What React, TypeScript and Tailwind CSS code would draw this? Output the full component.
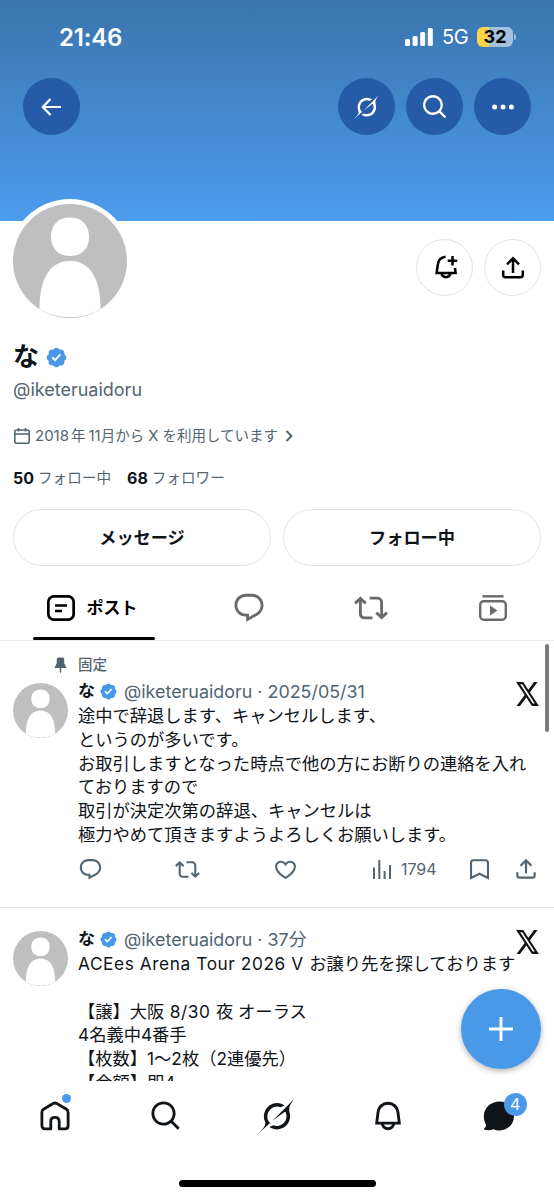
import type { ReactNode } from 'react';

const paths = {
  reply:
    'M1.751 10c0-4.42 3.584-8 8.005-8h4.366c4.49 0 8.129 3.64 8.129 8.13 0 2.96-1.607 5.68-4.196 7.11l-8.054 4.46v-3.69h-.067c-4.49.1-8.183-3.51-8.183-8.01zm8.005-6c-3.317 0-6.005 2.69-6.005 6 0 3.37 2.77 6.08 6.138 6.01l.351-.01h1.761v2.3l5.087-2.81c1.951-1.08 3.163-3.13 3.163-5.36 0-3.39-2.744-6.13-6.129-6.13H9.756z',
  repost:
    'M4.5 3.88l4.432 4.14-1.364 1.46L5.5 7.55V16c0 1.1.896 2 2 2H13v2H7.5c-2.209 0-4-1.79-4-4V7.55L1.432 9.48.068 8.02 4.5 3.88zM16.5 6H11V4h5.5c2.209 0 4 1.79 4 4v8.45l2.068-1.93 1.364 1.46-4.432 4.14-4.432-4.14 1.364-1.46 2.068 1.93V8c0-1.1-.896-2-2-2z',
  like: 'M16.697 5.5c-1.222-.06-2.679.51-3.89 2.16l-.805 1.09-.806-1.09C9.984 6.01 8.526 5.44 7.304 5.5c-1.243.07-2.349.78-2.91 1.91-.552 1.12-.633 2.78.479 4.82 1.074 1.97 3.257 4.27 7.129 6.61 3.87-2.34 6.052-4.64 7.126-6.61 1.111-2.04 1.03-3.7.477-4.82-.561-1.13-1.666-1.84-2.908-1.91zm4.187 7.69c-1.351 2.48-4.001 5.12-8.379 7.67l-.503.3-.504-.3c-4.379-2.55-7.029-5.19-8.382-7.67-1.36-2.5-1.41-4.86-.514-6.67.887-1.79 2.647-2.91 4.601-3.01 1.651-.09 3.368.56 4.798 2.01 1.429-1.45 3.146-2.1 4.796-2.01 1.954.1 3.714 1.22 4.601 3.01.896 1.81.846 4.17-.514 6.67z',
  share:
    'M12 2.59l5.7 5.7-1.41 1.42L13 6.41V16h-2V6.41l-3.3 3.3-1.41-1.42L12 2.59zM21 15l-.02 3.51c0 1.38-1.12 2.49-2.5 2.49H5.5C4.11 21 3 19.88 3 18.5V15h2v3.5c0 .28.22.5.5.5h12.98c.28 0 .5-.22.5-.5L19 15h2z',
  search:
    'M10.25 3.75c-3.59 0-6.5 2.91-6.5 6.5s2.91 6.5 6.5 6.5c1.795 0 3.419-.726 4.596-1.904 1.178-1.177 1.904-2.801 1.904-4.596 0-3.59-2.91-6.5-6.5-6.5zm-8.5 6.5c0-4.694 3.806-8.5 8.5-8.5s8.5 3.806 8.5 8.5c0 1.986-.682 3.815-1.824 5.262l4.781 4.781-1.414 1.414-4.781-4.781c-1.447 1.142-3.276 1.824-5.262 1.824-4.694 0-8.5-3.806-8.5-8.5z',
  bell: 'M19.993 9.042C19.48 5.017 16.054 2 11.996 2s-7.49 3.021-7.999 7.051L2.866 18H7.1c.463 2.282 2.481 4 4.9 4s4.437-1.718 4.9-4h4.236l-1.143-8.958zM12 20c-1.306 0-2.417-.835-2.829-2h5.658c-.412 1.165-1.523 2-2.829 2zm-6.866-4l.847-6.698C6.364 6.272 8.941 4 11.996 4s5.627 2.268 6.013 5.295L18.864 16H5.134z',
  pin: 'M7 4.5C7 3.12 8.12 2 9.5 2h5C15.88 2 17 3.12 17 4.5v5.26L20.12 16H13v5l-1 2-1-2v-5H3.88L7 9.76V4.5z',
};

const Icon = ({ name, className }: { name: keyof typeof paths; className: string }) => (
  <svg viewBox="0 0 24 24" fill="currentColor" className={`shrink-0 ${className}`}>
    <path d={paths[name]} />
  </svg>
);

const GrokIcon = ({ className }: { className: string }) => (
  <svg viewBox="0 0 33 32" fill="currentColor" className={className}>
    <path d="M12.745 20.54l10.97-8.19c.539-.4 1.307-.244 1.564.38 1.349 3.288.746 7.241-1.938 9.955-2.683 2.714-6.417 3.31-9.83 1.954l-3.728 1.745c5.347 3.697 11.84 2.782 15.898-1.324 3.219-3.255 4.216-7.692 3.284-11.693l.008.009c-1.351-5.878.332-8.227 3.782-13.031L33 0l-4.54 4.59v-.014L12.743 20.544m-2.263 1.987c-3.837-3.707-3.175-9.446.1-12.755 2.42-2.449 6.388-3.448 9.852-1.979l3.72-1.737c-.67-.49-1.53-1.017-2.515-1.387-4.455-1.854-9.789-.931-13.41 2.728-3.483 3.523-4.579 8.94-2.697 13.561 1.405 3.454-.899 5.898-3.22 8.364C1.49 30.2.666 31.074 0 32l10.478-9.466" />
  </svg>
);

const XLogo = () => (
  <svg viewBox="1.2 2.2 21.7 19.6" preserveAspectRatio="none" fill="#0f1419" className="h-6 w-[23px]">
    <path d="M18.244 2.25h3.308l-7.227 8.26 8.502 11.24H16.17l-5.214-6.817L4.99 21.75H1.68l7.73-8.835L1.254 2.25H8.08l4.713 6.231zm-1.161 17.52h1.833L7.084 4.126H5.117z" />
  </svg>
);

const Verified = ({ className }: { className: string }) => (
  <svg viewBox="0 0 22 22" fill="#4a99e9" className={className}>
    <path d="M20.396 11c-.018-.646-.215-1.275-.57-1.816-.354-.54-.852-.972-1.438-1.246.223-.607.27-1.264.14-1.897-.131-.634-.437-1.218-.882-1.687-.47-.445-1.053-.75-1.687-.882-.633-.13-1.29-.083-1.897.14-.273-.587-.704-1.086-1.245-1.44S11.647 1.62 11 1.604c-.646.017-1.273.213-1.813.568s-.969.854-1.24 1.44c-.608-.223-1.267-.272-1.902-.14-.635.13-1.22.436-1.69.882-.445.47-.749 1.055-.878 1.688-.13.633-.08 1.29.144 1.896-.587.274-1.087.705-1.443 1.245-.356.54-.555 1.17-.574 1.817.02.647.218 1.276.574 1.817.356.54.856.972 1.443 1.245-.224.606-.274 1.263-.144 1.896.13.634.433 1.218.877 1.688.47.443 1.054.747 1.687.878.633.132 1.29.084 1.897-.136.274.586.705 1.084 1.246 1.439.54.354 1.17.551 1.816.569.647-.016 1.276-.213 1.817-.567s.972-.854 1.245-1.44c.604.239 1.266.296 1.903.164.636-.132 1.22-.447 1.68-.907.46-.46.776-1.044.908-1.681s.075-1.299-.165-1.903c.586-.274 1.084-.705 1.439-1.246.354-.54.551-1.17.569-1.816zM9.662 14.85l-3.429-3.428 1.293-1.302 2.072 2.072 4.4-4.794 1.347 1.246z" />
  </svg>
);

const Avatar = ({ className }: { className: string }) => (
  <div className={`shrink-0 rounded-full overflow-hidden bg-[#bfbfbf] ${className}`}>
    <svg viewBox="0 0 114 114" fill="#fff" className="w-full h-full">
      <path d="M57 13.5c12 0 19 7.500 19 19.500S68.500 52 57 52s-19-7-19-19S45 13.500 57 13.500z" />
      <path d="M26.500 105C26.500 76 36 57 57 57s30.500 19 30.500 48c-17 11-44 11-61 0z" />
    </svg>
  </div>
);

const HeaderButton = ({ children }: { children: ReactNode }) => (
  <button className="w-[57px] h-[57px] rounded-full bg-[#265ca7] text-white flex items-center justify-center">
    {children}
  </button>
);

const StatusBar = () => (
  <div className="h-[74px] flex items-center justify-between pl-[59px] pr-[38px] text-white">
    <span className="mt-0.5 text-[24px] font-semibold tracking-[-0.2px]">21:46</span>
    <div className="flex items-center">
      <svg viewBox="0 0 28 18" fill="#fff" className="w-7 h-[18px]">
        <rect x="0" y="11" width="5" height="7" rx="1.500" />
        <rect x="7.600" y="8" width="5" height="10" rx="1.500" />
        <rect x="15.200" y="4" width="5" height="14" rx="1.500" />
        <rect x="22.800" y="0" width="5" height="18" rx="1.500" />
      </svg>
      <span className="text-[20px] ml-[9px] w-[26px] tracking-[-0.4px] leading-6">5G</span>
      <div className="ml-[9px] h-5 w-[36px] rounded-md bg-gradient-to-r from-[#fad547] from-[34%] to-[#a2c1dc] to-[34%] flex items-center justify-center text-black text-[18px] font-bold leading-5">
        32
      </div>
      <div className="ml-px w-[2px] h-1.5 rounded-r-full bg-[#a2c1dc]" />
    </div>
  </div>
);

const tabIcon = 'w-[34px] h-[34px]';

const Tabs = () => (
  <div className="h-[75px] border-b border-[#e9edef] flex text-[#6a6a6a]">
    <div className="w-[188px] pl-[33px]">
      <div className="w-[122px] h-full flex flex-col">
        <div className="flex-1 pt-[13px] pr-[4px] flex items-center justify-center gap-3 text-black">
          <svg viewBox="0 0 28 26" fill="none" stroke="currentColor" strokeWidth="2.700" className="w-7 h-[26px]">
            <rect x="1.350" y="1.350" width="25.300" height="23.300" rx="5.500" />
            <path d="M8 10.500h12M8 16h7" strokeWidth="2.500" />
          </svg>
          <span className="text-[17px] font-bold leading-6">ポスト</span>
        </div>
        <div className="h-[3px] rounded-full bg-black" />
      </div>
    </div>
    <div className="flex-1 pt-[10px] flex items-center justify-center">
      <Icon name="reply" className={tabIcon} />
    </div>
    <div className="flex-1 pt-[10px] flex items-center justify-center">
      <Icon name="repost" className={tabIcon} />
    </div>
    <div className="flex-1 pt-[10px] flex items-center justify-center">
      <svg viewBox="0 0 28 26" fill="none" stroke="currentColor" strokeWidth="2.400" className="w-7 h-[26px]">
        <rect x="1.200" y="6.200" width="25.600" height="18.600" rx="3.500" />
        <path d="M3.500 1.300h21" />
        <path d="M11 10.500l7.500 5-7.500 5z" fill="currentColor" stroke="none" />
      </svg>
    </div>
  </div>
);

const TweetHeader = ({ date }: { date: string }) => (
  <div className="h-[23px] flex items-center text-[17px] leading-[23px] whitespace-nowrap">
    <span className="font-bold text-[#0f1419]">な</span>
    <Verified className="w-[19px] h-[19px] ml-1 mr-1.5" />
    <span className="text-[#536471] text-[17.900px]">@iketeruaidoru · {date}</span>
  </div>
);

// Latin runs are tracked slightly wider than the Japanese text around them
const TweetLine = ({ text }: { text: string }) => (
  <div className="h-[23.800px]">
    {text.split(/([ -~]{2,})/).map((part, i) => (
      <span key={i} className={i % 2 ? 'tracking-[0.580px]' : ''}>{part}</span>
    ))}
  </div>
);

const Tweet = ({ pinned, date, lines, children }: { pinned?: boolean; date: string; lines: string[]; children?: ReactNode }) => (
  <article className="pr-[15px] pl-[13px]">
    {pinned && (
      <div className="flex items-center h-5 mb-[5px] text-[#536471] text-[14.500px] font-medium leading-5">
        <Icon name="pin" className="w-[19px] h-[18px] ml-[38px] mr-2" />
        固定
      </div>
    )}
    <div className="flex">
      <Avatar className="w-[55px] h-[55px] mt-[3px]" />
      <div className="ml-[10px] flex-1 min-w-0">
        <div className="flex justify-between">
          <TweetHeader date={date} />
          <div className="h-[23px] mt-0.5">
            <XLogo />
          </div>
        </div>
        <div className="-mt-px text-[17.270px] leading-[23.800px] text-[#0f1419] whitespace-pre">
          {lines.map((line, i) => (
            <TweetLine key={i} text={line} />
          ))}
        </div>
        {children}
      </div>
    </div>
  </article>
);

const Actions = () => (
  <div className="mt-[10px] h-[25px] flex items-center text-[#536471]">
    <div className="w-[97.800px]"><Icon name="reply" className="w-[25px] h-[25px]" /></div>
    <div className="w-[97.800px]"><Icon name="repost" className="w-[25px] h-[25px]" /></div>
    <div className="w-[97.800px]"><Icon name="like" className="w-[25px] h-[25px]" /></div>
    <div className="w-[97.800px] flex items-center gap-[10px] pl-[3px]">
      <svg viewBox="0 0 18 19" fill="currentColor" className="w-[18px] h-[19px]">
        <path d="M0 7.500h2V19H0zM5.300 0h2v19h-2zM10.600 11h2v8h-2zM16 5h2v14h-2z" />
      </svg>
      <span className="text-[16px] leading-5">1794</span>
    </div>
    <div className="w-[46px] pl-[3px]">
      <svg viewBox="0 0 19 21" fill="none" stroke="currentColor" strokeWidth="2.100" className="w-[19px] h-[21px]">
        <path d="M1.050 19V3.500a2.200 2.200 0 0 1 2.200-2.200h12.500a2.200 2.200 0 0 1 2.200 2.200V19L9.500 14.700z" />
      </svg>
    </div>
    <Icon name="share" className="w-[26px] h-[26px]" />
  </div>
);

const BottomNav = () => (
  <nav className="h-[118px] bg-white flex flex-col items-center justify-between">
    <div className="h-[70px] w-full grid grid-cols-5 place-items-center text-[#0f1419]">
      <div className="relative">
        <svg viewBox="0 0 30 30" fill="none" stroke="currentColor" strokeWidth="2.800" strokeLinejoin="round" className="w-[30px] h-[30px]">
          <path d="M1.900 11.200c0-1.300.5-2.200 1.600-2.900L13.200 2.500c1.200-.7 2.400-.7 3.600 0l9.700 5.800c1.100.7 1.600 1.600 1.600 2.900v13.600c0 2-1.100 3.100-3.100 3.100h-5.800v-7.600c0-2.400-1.700-4-4.200-4s-4.200 1.600-4.200 4v7.600H5c-2 0-3.100-1.100-3.100-3.100z" />
        </svg>
        <span className="absolute -top-[7px] -right-[1px] w-[9px] h-[9px] rounded-full bg-[#4a99e9]" />
      </div>
      <Icon name="search" className="w-[34px] h-[34px]" />
      <GrokIcon className="w-[35px] h-[34px]" />
      <Icon name="bell" className="w-[34px] h-[34px]" />
      <div className="relative">
        <svg viewBox="0 0 32 30" fill="currentColor" className="w-8 h-[30px]">
          <path d="M16.500 0.500C25 .5 31 7 31 15s-6.200 14.500-14.500 14.500c-2.300 0-4.300-.5-6-1.300-2.700 1.100-5.800 1.300-8.700.6-.9-.2-1-1.200-.3-1.700 1.200-.9 1.700-2 1.500-3.400C1.500 21.200.8 18.300.8 15.300.8 7 7.700.5 16.500.5z" />
        </svg>
        <span className="absolute -top-[8px] -right-[12px] w-[23px] h-[23px] rounded-full bg-[#4a99e9] text-white text-[16px] leading-[23px] text-center">
          4
        </span>
      </div>
    </div>
    <div className="mb-3 w-[197px] h-[7px] rounded-full bg-black" />
  </nav>
);

const pinnedLines = [
  '途中で辞退します、キャンセルします、',
  'というのが多いです。',
  'お取引しますとなった時点で他の方にお断りの連絡を入れ',
  'ておりますので',
  '取引が決定次第の辞退、キャンセルは',
  '極力やめて頂きますようよろしくお願いします。',
];

const ticketLines = [
  'ACEes Arena Tour 2026 V お譲り先を探しております',
  '',
  '【譲】大阪 8/30 夜 オーラス',
  '4名義中4番手',
  '【枚数】1〜2枚（2連優先）',
  '【金額】即4',
];

const App = () => {
  return (
    <div
      lang="ja"
      className="relative w-[554px] h-[1199px] bg-white overflow-hidden flex flex-col font-['Inter','Noto_Sans_CJK_JP',sans-serif] text-[#0f1419]"
    >
      {/* Banner */}
      <header className="h-[221px] shrink-0 bg-gradient-to-b from-[#3a75ae] to-[#4c9cec]">
        <StatusBar />
        <div className="mt-1 flex items-center pl-[23px] pr-[23px] gap-[11px]">
          <HeaderButton>
            <svg viewBox="0 0 20 18" fill="none" stroke="currentColor" strokeWidth="2.200" className="w-5 h-[18px] mr-0.5">
              <path d="M9.500 1L1.800 9l7.700 8M2 9h18" />
            </svg>
          </HeaderButton>
          <div className="flex-1" />
          <HeaderButton><GrokIcon className="w-[25px] h-6" /></HeaderButton>
          <HeaderButton><Icon name="search" className="w-[28px] h-[28px] ml-px" /></HeaderButton>
          <HeaderButton>
            <svg viewBox="0 0 22 6" fill="currentColor" className="w-[22px] h-1.5">
              <circle cx="2.600" cy="3" r="2.500" />
              <circle cx="11" cy="3" r="2.500" />
              <circle cx="19.400" cy="3" r="2.500" />
            </svg>
          </HeaderButton>
        </div>
      </header>

      {/* Profile */}
      <section className="shrink-0 h-[345px] px-[13px]">
        <div className="flex justify-between h-[98px]">
          <div className="-mt-[22px] -ml-[5px] w-[124px] h-[124px] rounded-full bg-white p-[5px]">
            <Avatar className="w-[114px] h-[114px]" />
          </div>
          <div className="mt-[18px] flex gap-[11px] text-black">
            <button className="w-[57px] h-[57px] rounded-full border border-[#dfe2e4] flex items-center justify-center">
              <svg viewBox="0 0 24 24" fill="none" stroke="currentColor" strokeWidth="2.500" className="w-6 h-6 mb-0.5 ml-0.5">
                <path d="M11.500 1.800C7 2.300 4.200 5.500 3.800 10L2.600 18h19l-.6-5M7.500 18.500c.6 2.500 2.200 3.700 4.500 3.700s3.900-1.200 4.500-3.700" />
                <path d="M18.500 1v9.500M13.700 5.700h9.600" />
              </svg>
            </button>
            <button className="w-[57px] h-[57px] rounded-full border border-[#dfe2e4] flex items-center justify-center">
              <svg viewBox="0 0 24 24" fill="none" stroke="currentColor" strokeWidth="2.500" className="w-6 h-6">
                <path d="M12 17V3M6 8.300l6-6 6 6M2.200 14.500v4.600c0 1.200.9 2.100 2.100 2.100h15.400c1.200 0 2.100-.9 2.100-2.100v-4.600" />
              </svg>
            </button>
          </div>
        </div>

        <div className="mt-[22px] h-8 flex items-center">
          <h1 className="text-[26px] font-bold leading-8">な</h1>
          <Verified className="w-[23px] h-[23px] ml-1.5" />
        </div>
        <div className="mt-[5px] text-[18px] leading-6 text-[#536471]">@iketeruaidoru</div>

        <div className="mt-[22px] flex items-center h-6 text-[14.500px] leading-6 text-[#536471] whitespace-nowrap">
          <svg viewBox="0 0 16 16" fill="none" stroke="currentColor" strokeWidth="1.600" className="w-4 h-4 ml-px mr-[5px]">
            <rect x=".8" y="2" width="14.400" height="13.200" rx="2" />
            <path d="M1 6h14M4.500 0v3.500M11.500 0v3.500" />
          </svg>
          <span className="text-[15px] mr-0.5">2018</span>年
          <span className="text-[15px] ml-[3px]">11</span>月から
          <span className="text-[15px] mx-[4px]">X</span>を利用しています
          <svg viewBox="0 0 8 12" fill="none" stroke="currentColor" strokeWidth="1.900" className="w-2 h-3 ml-[7px]">
            <path d="M1.500 1l5 5-5 5" />
          </svg>
        </div>

        <div className="mt-[18px] flex items-center h-6 text-[14.600px] leading-6 text-[#536471]">
          <span className="text-[16px] font-bold text-[#0f1419] mr-1">50</span>フォロー中
          <span className="text-[16px] font-bold text-[#0f1419] ml-4 mr-1">68</span>フォロワー
        </div>

        <div className="mt-[19px] flex gap-3 text-[17.200px] font-bold">
          <button className="flex-1 h-[57px] rounded-full border border-[#dfe2e4]">メッセージ</button>
          <button className="flex-1 h-[57px] rounded-full border border-[#dfe2e4]">フォロー中</button>
        </div>
      </section>

      <Tabs />

      {/* Timeline */}
      <main className="flex-1 min-h-0 overflow-hidden">
        <div className="h-[267px] pt-[14px] border-b border-[#e1e5e7]">
          <Tweet pinned date="2025/05/31" lines={pinnedLines}>
            <Actions />
          </Tweet>
        </div>
        <div className="pt-5">
          <Tweet date="37分" lines={ticketLines} />
        </div>
      </main>

      <BottomNav />

      {/* Scroll indicator and compose button float above the timeline */}
      <div className="absolute top-[644px] right-[5px] w-[4px] h-[88px] rounded-full bg-[#7a7a7a]" />
      <button className="absolute top-[989px] left-[461px] w-20 h-20 rounded-full bg-[#4a99e9] shadow-[0_2px_6px_rgba(0,0,0,0.3)] flex items-center justify-center">
        <svg viewBox="0 0 24 24" stroke="#fff" strokeWidth="2.900" className="w-6 h-6">
          <path d="M12 0v24M0 12h24" />
        </svg>
      </button>
    </div>
  );
};

export default App;
